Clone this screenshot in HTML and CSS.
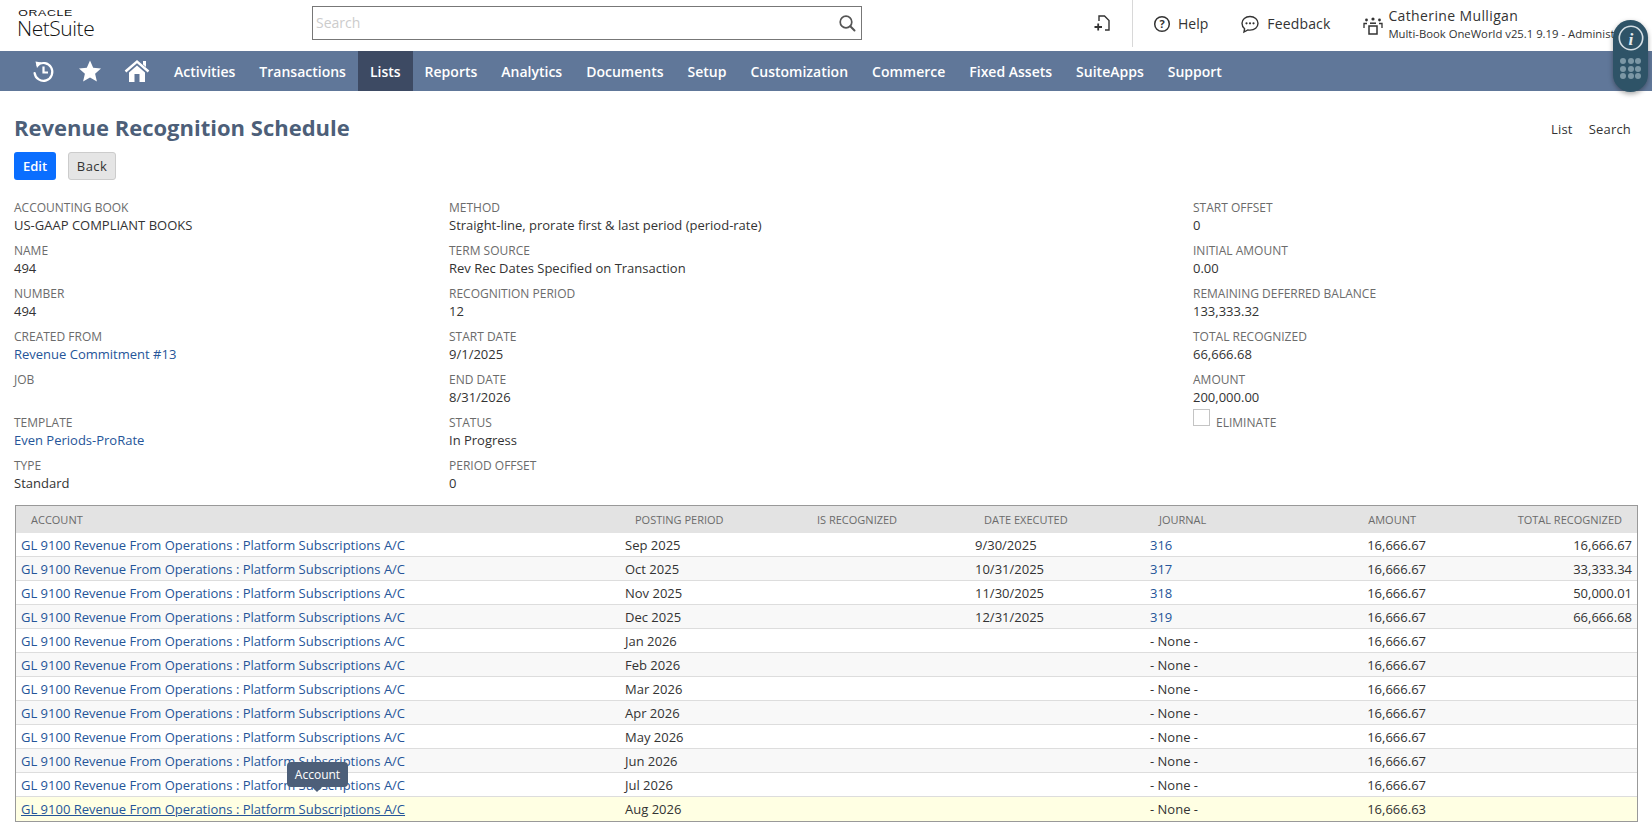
FILE: index.html
```html
<!DOCTYPE html>
<html lang="en">
<head>
<meta charset="utf-8">
<title>Revenue Recognition Schedule</title>
<link rel="stylesheet" href="styles.css">
</head>
<body>
<header class="topbar">
  <div class="logo"><span class="logo-oracle">ORACLE</span><span class="logo-ns">NetSuite</span></div>
  <div class="search"><span class="search-ph">Search</span>
    <svg class="search-icon" viewBox="0 0 18 18" width="18" height="18"><circle cx="8" cy="8" r="5.800" fill="none" stroke="#555" stroke-width="1.700"/><path d="M12.300 12.300 L16.500 16.500" stroke="#555" stroke-width="2" stroke-linecap="round"/></svg>
  </div>
  <div class="addpage">
    <svg viewBox="0 0 16 16" width="16" height="16"><path d="M5 6V1h5.500L15 5.500V15h-4" fill="none" stroke="#333" stroke-width="1.400"/><path d="M0.500 12h7.500M4.200 8.500v7" stroke="#333" stroke-width="1.800"/></svg>
  </div>
  <div class="toplink help">
    <svg viewBox="0 0 18 18" width="18" height="18"><circle cx="9" cy="9" r="7.300" fill="none" stroke="#333" stroke-width="1.500"/><text x="9" y="12.600" class="qmark">?</text></svg>
    <span>Help</span>
  </div>
  <div class="toplink feedback">
    <svg viewBox="0 0 20 20" width="20" height="20"><path d="M10 2.500c4.600 0 8 2.900 8 6.800s-3.400 6.800-8 6.800c-.8 0-1.500-.1-2.200-.2L4 18l.6-3.300C3 13.500 2 11.600 2 9.300 2 5.400 5.400 2.500 10 2.500z" fill="none" stroke="#333" stroke-width="1.400"/><circle cx="6.500" cy="9.300" r="1.100" fill="#333"/><circle cx="10" cy="9.300" r="1.100" fill="#333"/><circle cx="13.500" cy="9.300" r="1.100" fill="#333"/></svg>
    <span>Feedback</span>
  </div>
  <div class="role">
    <svg class="role-icon" viewBox="0 0 20 20" width="20" height="20"><circle cx="10" cy="3" r="1.600" fill="#333"/><circle cx="3.500" cy="4" r="1.400" fill="#333"/><circle cx="16.500" cy="4" r="1.400" fill="#333"/><path d="M1 12V7.500h3M19 12V7.500h-3" fill="none" stroke="#333" stroke-width="1.300"/><rect x="6" y="10" width="8" height="8" fill="none" stroke="#333" stroke-width="1.500"/><path d="M7 7.200h6" stroke="#333" stroke-width="1.500"/></svg>
    <div class="role-text">
      <div class="role-name">Catherine Mulligan</div>
      <div class="role-sub">Multi-Book OneWorld v25.1 9.19 - Administrator</div>
    </div>
  </div>
</header>

<nav class="navbar">
  <span class="navicon">
    <svg viewBox="0 0 24 24" width="24" height="24"><path d="M6.600 6.200A8.900 8.900 0 1 1 3.600 14" fill="none" stroke="#fff" stroke-width="2.200" stroke-linecap="round"/><path d="M4.500 2.500 L10.500 3.500 L6 9z" fill="#fff"/><path d="M12.500 7.500V13.500H17" fill="none" stroke="#fff" stroke-width="2.200"/></svg>
  </span>
  <span class="navicon">
    <svg viewBox="0 0 24 24" width="24" height="24"><path d="M12 1.500l3.200 7.300 7.800.7-5.900 5.200 1.800 7.800-6.900-4.100-6.900 4.100 1.800-7.800L1 9.500l7.800-.7z" fill="#fff"/></svg>
  </span>
  <span class="navicon navicon-home">
    <svg viewBox="0 0 26 24" width="26" height="24"><path d="M1.500 12.500L13 2.500l11.500 10" fill="none" stroke="#fff" stroke-width="2.400"/><path d="M19 2h3v6l-3-2.600z" fill="#fff"/><path d="M5 13.500L13 6.500l8 7V23H5z" fill="#fff"/><rect x="10.500" y="15" width="5" height="8" fill="#607799"/></svg>
  </span>
  <a class="navitem">Activities</a>
  <a class="navitem">Transactions</a>
  <a class="navitem active">Lists</a>
  <a class="navitem">Reports</a>
  <a class="navitem">Analytics</a>
  <a class="navitem">Documents</a>
  <a class="navitem">Setup</a>
  <a class="navitem">Customization</a>
  <a class="navitem">Commerce</a>
  <a class="navitem">Fixed Assets</a>
  <a class="navitem">SuiteApps</a>
  <a class="navitem">Support</a>
</nav>

<aside class="widget">
  <svg viewBox="0 0 24 24" width="26" height="26"><circle cx="12" cy="12" r="10.800" fill="none" stroke="#d5dfe5" stroke-width="1.500"/><text x="12" y="18" class="info-i">i</text></svg>
  <div class="dots"><i></i><i></i><i></i><i></i><i></i><i></i><i></i><i></i><i></i></div>
</aside>

<main class="page">
  <div class="titlerow">
    <h1 class="title">Revenue Recognition Schedule</h1>
    <div class="titlelinks"><span>List</span><span>Search</span></div>
  </div>
  <div class="buttons">
    <button class="btn btn-primary">Edit</button>
    <button class="btn btn-secondary">Back</button>
  </div>

  <section class="fields">
    <div class="col col1">
      <div class="field"><div class="label">ACCOUNTING BOOK</div><div class="value">US-GAAP COMPLIANT BOOKS</div></div>
      <div class="field"><div class="label">NAME</div><div class="value">494</div></div>
      <div class="field"><div class="label">NUMBER</div><div class="value">494</div></div>
      <div class="field"><div class="label">CREATED FROM</div><div class="value link">Revenue Commitment #13</div></div>
      <div class="field"><div class="label">JOB</div><div class="value">&nbsp;</div></div>
      <div class="field"><div class="label">TEMPLATE</div><div class="value link">Even Periods-ProRate</div></div>
      <div class="field"><div class="label">TYPE</div><div class="value">Standard</div></div>
    </div>
    <div class="col col2">
      <div class="field"><div class="label">METHOD</div><div class="value">Straight-line, prorate first &amp; last period (period-rate)</div></div>
      <div class="field"><div class="label">TERM SOURCE</div><div class="value">Rev Rec Dates Specified on Transaction</div></div>
      <div class="field"><div class="label">RECOGNITION PERIOD</div><div class="value">12</div></div>
      <div class="field"><div class="label">START DATE</div><div class="value">9/1/2025</div></div>
      <div class="field"><div class="label">END DATE</div><div class="value">8/31/2026</div></div>
      <div class="field"><div class="label">STATUS</div><div class="value">In Progress</div></div>
      <div class="field"><div class="label">PERIOD OFFSET</div><div class="value">0</div></div>
    </div>
    <div class="col col3">
      <div class="field"><div class="label">START OFFSET</div><div class="value">0</div></div>
      <div class="field"><div class="label">INITIAL AMOUNT</div><div class="value">0.00</div></div>
      <div class="field"><div class="label">REMAINING DEFERRED BALANCE</div><div class="value">133,333.32</div></div>
      <div class="field"><div class="label">TOTAL RECOGNIZED</div><div class="value">66,666.68</div></div>
      <div class="field"><div class="label">AMOUNT</div><div class="value">200,000.00</div></div>
      <div class="checkfield"><span class="checkbox"></span><span class="label">ELIMINATE</span></div>
    </div>
  </section>

  <table class="grid">
    <colgroup><col class="c-account"><col class="c-period"><col class="c-rec"><col class="c-date"><col class="c-journal"><col class="c-amount"><col class="c-total"></colgroup>
    <thead>
      <tr><th>ACCOUNT</th><th>POSTING PERIOD</th><th>IS RECOGNIZED</th><th>DATE EXECUTED</th><th>JOURNAL</th><th class="num">AMOUNT</th><th class="num">TOTAL RECOGNIZED</th></tr>
    </thead>
    <tbody>
      <tr><td class="link">GL 9100 Revenue From Operations : Platform Subscriptions A/C</td><td>Sep 2025</td><td></td><td>9/30/2025</td><td class="link">316</td><td class="num">16,666.67</td><td class="num">16,666.67</td></tr>
      <tr><td class="link">GL 9100 Revenue From Operations : Platform Subscriptions A/C</td><td>Oct 2025</td><td></td><td>10/31/2025</td><td class="link">317</td><td class="num">16,666.67</td><td class="num">33,333.34</td></tr>
      <tr><td class="link">GL 9100 Revenue From Operations : Platform Subscriptions A/C</td><td>Nov 2025</td><td></td><td>11/30/2025</td><td class="link">318</td><td class="num">16,666.67</td><td class="num">50,000.01</td></tr>
      <tr><td class="link">GL 9100 Revenue From Operations : Platform Subscriptions A/C</td><td>Dec 2025</td><td></td><td>12/31/2025</td><td class="link">319</td><td class="num">16,666.67</td><td class="num">66,666.68</td></tr>
      <tr><td class="link">GL 9100 Revenue From Operations : Platform Subscriptions A/C</td><td>Jan 2026</td><td></td><td></td><td>- None -</td><td class="num">16,666.67</td><td></td></tr>
      <tr><td class="link">GL 9100 Revenue From Operations : Platform Subscriptions A/C</td><td>Feb 2026</td><td></td><td></td><td>- None -</td><td class="num">16,666.67</td><td></td></tr>
      <tr><td class="link">GL 9100 Revenue From Operations : Platform Subscriptions A/C</td><td>Mar 2026</td><td></td><td></td><td>- None -</td><td class="num">16,666.67</td><td></td></tr>
      <tr><td class="link">GL 9100 Revenue From Operations : Platform Subscriptions A/C</td><td>Apr 2026</td><td></td><td></td><td>- None -</td><td class="num">16,666.67</td><td></td></tr>
      <tr><td class="link">GL 9100 Revenue From Operations : Platform Subscriptions A/C</td><td>May 2026</td><td></td><td></td><td>- None -</td><td class="num">16,666.67</td><td></td></tr>
      <tr><td class="link">GL 9100 Revenue From Operations : Platform Subscriptions A/C</td><td>Jun 2026</td><td></td><td></td><td>- None -</td><td class="num">16,666.67</td><td></td></tr>
      <tr><td class="link">GL 9100 Revenue From Operations : Platform Subscriptions A/C</td><td>Jul 2026</td><td></td><td></td><td>- None -</td><td class="num">16,666.67</td><td></td></tr>
      <tr class="hover"><td class="link"><u>GL 9100 Revenue From Operations : Platform Subscriptions A/C</u></td><td>Aug 2026</td><td></td><td></td><td>- None -</td><td class="num">16,666.63</td><td></td></tr>
    </tbody>
  </table>
</main>
<div class="tooltip">Account</div>
</body>
</html>
```
FILE: styles.css
```css
* { box-sizing: border-box; }
html, body { margin: 0; padding: 0; height: 822px; overflow: hidden; background: #fff; }
body { font-family: "Open Sans", "DejaVu Sans", sans-serif; font-size: 13px; color: #333; position: relative; }

.topbar { height: 51px; display: flex; align-items: flex-start; overflow: hidden; white-space: nowrap; }
.logo { width: 312px; padding: 8px 0 0 17px; display: flex; flex-direction: column; color: #111; }
.logo-oracle { font-family: "Liberation Sans", sans-serif; font-size: 9.500px; line-height: 9px; letter-spacing: 0.500px; transform-origin: left; padding-left: 1px; transform: scaleX(1.300); }
.logo-ns { font-family: "Open Sans", sans-serif; font-weight: 300; font-size: 21px; line-height: 22px; letter-spacing: -0.450px; }
.search { width: 550px; height: 34px; margin-top: 6px; border: 1px solid #777; display: flex; align-items: center; justify-content: space-between; padding: 0 5px 0 3px; }
.search-ph { color: #ccc; font-size: 14px; margin-top: -1px; }
.addpage { width: 271px; height: 47px; flex: none; padding: 15px 0 0 232px; border-right: 1px solid #d8d8d8; }
.toplink { display: flex; align-items: center; gap: 7px; height: 47px; font-size: 14px; }
.help { margin-left: 20px; }
.feedback { margin-left: 32px; gap: 7px; }
.feedback span { letter-spacing: 0.150px; }
.qmark { font: 700 11px "Open Sans", sans-serif; text-anchor: middle; fill: #333; }
.role { display: flex; margin-left: 33px; gap: 5px; padding-top: 6px; }
.role-icon { margin-top: 10px; }
.role-name { font-size: 14px; font-weight: 500; letter-spacing: 0.370px; line-height: 20px; }
.role-sub { font-size: 11.300px; line-height: 16px; }

.navbar { height: 40px; background: #607799; display: flex; align-items: stretch; padding-left: 19px; overflow: hidden; }
.navicon { display: flex; align-items: center; justify-content: center; width: 47px; }
.navicon-home { margin-right: 2px; }
.navitem { display: flex; align-items: center; padding: 0 12px; color: #fff; font-size: 14px; font-weight: 600; }
.navitem.active { background: #3d4a63; }

.widget { position: absolute; left: 1613px; top: 20px; width: 35px; height: 72px; background: #2e5367; border-radius: 17.500px; box-shadow: 0 2px 5px rgba(0,0,0,.35); display: flex; flex-direction: column; align-items: center; padding-top: 5px; gap: 7px; }
.info-i { font: italic 700 16px "Liberation Serif", serif; text-anchor: middle; fill: #e4ebef; }
.dots { display: grid; grid-template-columns: repeat(3, 6px); gap: 1.500px; }
.dots i { width: 6px; height: 6px; border-radius: 50%; background: #7c97a5; }

.page { padding: 0 21px 0 14px; }
.titlerow { display: flex; justify-content: space-between; align-items: center; padding-top: 19px; height: 53px; }
.title { margin: 0; font-size: 22px; line-height: 32px; font-weight: 700; color: #4d5f79; }
.titlelinks { display: flex; gap: 16px; font-size: 13px; font-weight: 500; letter-spacing: 0.200px; color: #333; margin-top: 3px; }
.buttons { display: flex; gap: 12px; margin-top: 8px; }
.btn { height: 28px; font: 600 13px "Open Sans", sans-serif; border-radius: 3px; padding: 0; }
.btn-primary { width: 42px; background: #0a6eff; color: #fff; border: 0; }
.btn-secondary { width: 48px; background: #e5e5e5; color: #333; border: 1px solid #ccc; font-weight: 500; letter-spacing: 0.400px; }

.fields { display: grid; grid-template-columns: 435px 744px 1fr; margin-top: 18px; height: 308px; }
.field { height: 43px; }
.label { color: #6b6b6b; font-size: 12px; line-height: 16px; padding-top: 2px; }
.value { font-size: 13px; line-height: 18px; }
.link { color: #255599; }
.checkfield { display: flex; align-items: flex-start; margin-top: -4px; gap: 6px; }
.checkfield .label { margin-top: 4px; }
.checkbox { width: 17px; height: 17px; border: 1px solid #c4c4c4; background: #fff; }

.grid { position: absolute; left: 15px; top: 505px; width: 1623px; table-layout: fixed; border-collapse: separate; border-spacing: 0; border: 1px solid #999; }
.c-account { width: 604px; } .c-period { width: 182px; } .c-rec { width: 168px; } .c-date { width: 175px; } .c-journal { width: 143px; } .c-amount { width: 144px; } .c-total { width: 205px; }
th { height: 27px; background: #e3e3e3; font-size: 11px; font-weight: 400; color: #6b6b6b; text-align: left; padding: 0 16px 0 15px; white-space: nowrap; }
th:nth-child(4) { padding-left: 14px; }
th:nth-child(5) { padding-left: 14px; }
th:nth-child(7) { padding-right: 15px; }
td { height: 24px; padding: 0 6px 0 5px; border-bottom: 1px solid #ddd; white-space: nowrap; overflow: hidden; }
td:nth-child(7) { padding-right: 5px; }
tbody tr:nth-child(even) td { background: #f8f8f8; }
tr.hover td { background: #ffffe3 !important; border-bottom: 0; }
.num { text-align: right; }

.tooltip { position: absolute; left: 287px; top: 762px; width: 61px; height: 25px; background: #4d5f79; color: #fff; border-radius: 4px; font-size: 12px; line-height: 25px; text-align: center; }
.tooltip::after { content: ""; position: absolute; left: 25px; top: 25px; border: 5px solid transparent; border-top-color: #4d5f79; border-bottom: 0; }
```
